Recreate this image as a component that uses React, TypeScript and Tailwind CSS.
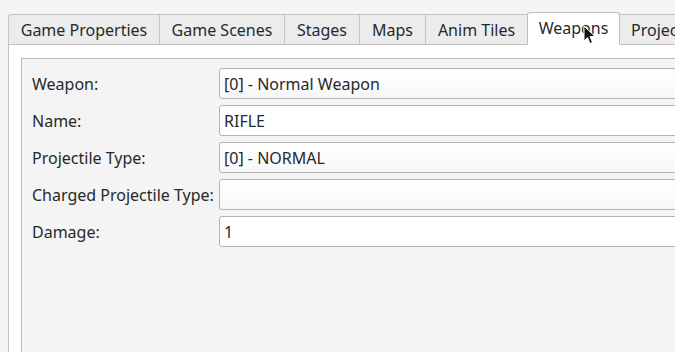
import React from 'react';

const tabs = [
  { label: 'Game Properties', w: 'w-[151px] justify-center' },
  { label: 'Game Scenes', w: 'w-[125px] justify-center' },
  { label: 'Stages', w: 'w-[75px] justify-center' },
  { label: 'Maps', w: 'w-[66px] justify-center' },
  { label: 'Anim Tiles', w: 'w-[102px] justify-center' },
  { label: 'Weapons', w: 'w-[93px] justify-center', active: true },
  { label: 'Projectiles', w: 'w-[110px] justify-start pl-[11px]' },
];

const rows: { label: string; value: string; combo: boolean }[] = [
  { label: 'Weapon:', value: '[0] - Normal Weapon', combo: true },
  { label: 'Name:', value: 'RIFLE', combo: false },
  { label: 'Projectile Type:', value: '[0] - NORMAL', combo: true },
  { label: 'Charged Projectile Type:', value: '', combo: true },
  { label: 'Damage:', value: '1', combo: false },
];

const Cursor = () => (
  <svg className="absolute left-[583px] top-[25px] z-20" width="13" height="20" viewBox="0 0 13 20">
    <path d="M1 1 L1 16 L4.5 12.5 L7 18.5 L9.5 17.5 L7 11.5 L12 11.5 Z" fill="#111" stroke="#fff" strokeWidth="1" strokeLinejoin="round" />
  </svg>
);

export default function App() {
  return (
    <div
      className="relative w-[675px] h-[352px] overflow-hidden bg-[#f4f4f4] text-[16px] text-[#26292c]"
      style={{ fontFamily: '"Noto Sans", "Open Sans", sans-serif' }}
    >
      <Cursor />
      <div className="pl-[8px] pt-[12px]">
        {/* tab bar */}
        <div className="relative z-10 flex items-end -mb-px">
          {tabs.map((t, i) =>
            t.active ? (
              <div
                key={t.label}
                className={`${t.w} h-[33px] shrink-0 flex items-center bg-white border border-[#bdbdbd] border-b-white rounded-t-[3px] pb-[2px]`}
              >
                {t.label}
              </div>
            ) : (
              <div
                key={t.label}
                className={`${t.w} h-[31px] shrink-0 flex items-center bg-[#ececec] border-t border-b border-[#c4c4c4] whitespace-nowrap ${i === 0 ? 'border-l rounded-tl-[3px]' : ''} ${tabs[i - 1]?.active ? '' : 'border-l'}`}
              >
                {t.label}
              </div>
            )
          )}
        </div>

        {/* tab pane */}
        <div className="w-[720px] h-[320px] bg-white border-l border-t border-[#c4c4c4] pl-[12px] pt-[13px]">
          <div className="w-[700px] h-[320px] bg-[#f4f4f4] border-l border-t border-[#b8b8b8] pl-[10px] pt-[9px] flex flex-col gap-[6px]">
            {rows.map((r) => (
              <div key={r.label} className="flex items-center h-[31px]">
                <div className="w-[187px] shrink-0 whitespace-nowrap">{r.label}</div>
                <div
                  className={`w-[500px] h-[31px] flex items-center px-[4px] rounded-[3px] border border-[#b4b4b4] ${
                    r.combo ? 'bg-gradient-to-b from-white to-[#f7f7f7]' : 'bg-white'
                  }`}
                >
                  {r.value}
                </div>
              </div>
            ))}
          </div>
        </div>
      </div>
    </div>
  );
}
